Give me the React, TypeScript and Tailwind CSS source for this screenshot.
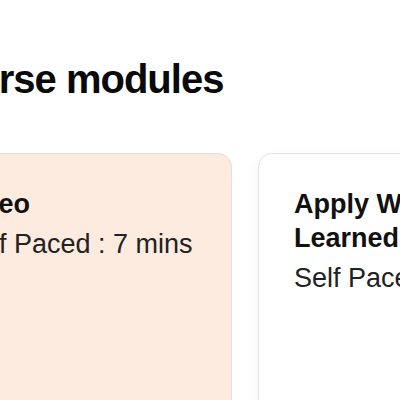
export default function App() {
  return (
    <div className="w-[400px] h-[400px] overflow-hidden bg-white" style={{ fontFamily: '"Liberation Sans", Arial, sans-serif' }}>
      <div className="ml-[-76px] w-[700px]">
        <h1 className="pt-[59px] text-[40px] leading-[40px] font-bold tracking-[-1px] text-[#0a0a0a]">
          Course modules
        </h1>
        <div className="mt-[54px] flex gap-[26px]">
          <div className="w-[308px] h-[300px] shrink-0 rounded-[14px] border border-[#e2e0de] bg-[#fdebe0] pl-[34px] pr-[20px] pt-[33px]">
            <div className="text-[27px] leading-[34px] font-bold text-[#111] ml-[-2px]">Video</div>
            <div className="mt-[6px] text-[27px] leading-[34px] text-[#222] ml-[1px]">Self Paced : 7 mins</div>
          </div>
          <div className="w-[308px] h-[300px] shrink-0 rounded-[14px] border border-[#e2e2e2] bg-white pl-[35px] pr-[20px] pt-[33px] shadow-[0_4px_16px_rgba(0,0,0,0.04)]">
            <div className="text-[27px] leading-[34px] font-bold text-[#111]">Apply What You've Learned</div>
            <div className="mt-[6px] text-[27px] leading-[34px] text-[#222] whitespace-nowrap">Self Paced : 5 mins</div>
          </div>
        </div>
      </div>
    </div>
  );
}
